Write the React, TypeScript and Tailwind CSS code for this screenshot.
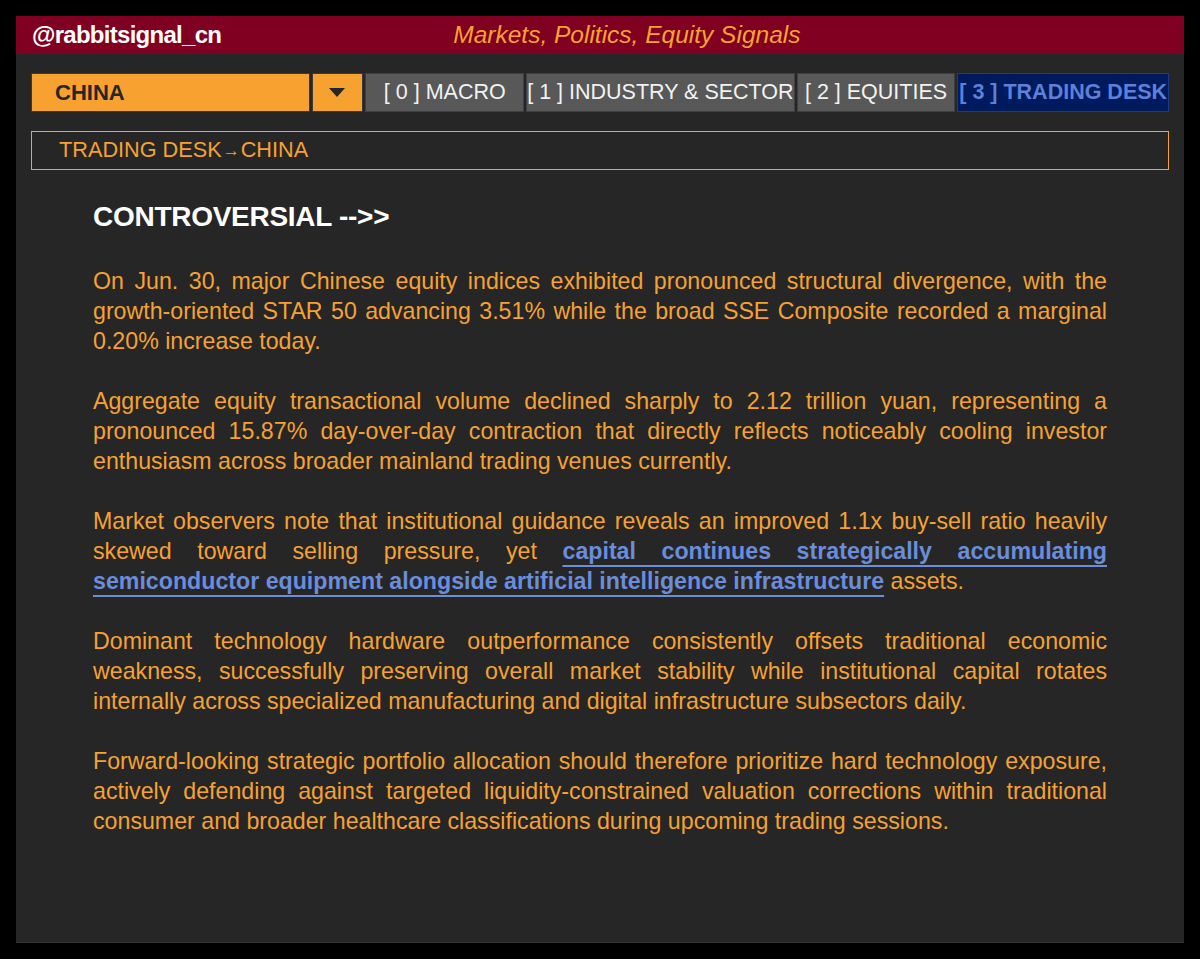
import React from "react";

const tabs = [
    { label: "[ 0 ] MACRO", width: "w-[159px]", active: false },
    { label: "[ 1 ] INDUSTRY & SECTOR", width: "w-[269px]", active: false },
    { label: "[ 2 ] EQUITIES", width: "w-[159px]", active: false },
    { label: "[ 3 ] TRADING DESK", width: "w-[212px]", active: true },
];

export default function App() {
    return (
        <div className="min-h-[959px] bg-black pt-4 font-['Liberation_Sans',Arial,sans-serif]">
            <div className="mx-4 h-[927px] bg-[#262626] border-b border-[#333]">
                <header className="flex h-[38px] items-center bg-[#7f0020] px-4">
                    <span className="text-[24px] font-bold tracking-[-0.03em] text-white">@rabbitsignal_cn</span>
                    <span className="ml-[232px] text-[24.5px] italic text-[#f5a233]">Markets, Politics, Equity Signals</span>
                </header>

                <div className="px-[15px]">
                    <nav className="mt-[19px] flex h-[39px] gap-[2px]">
                        <div className="flex w-[279px] items-center border border-[#3a3a3a] bg-[#f7a230] pl-[23px] text-[22px] font-bold text-[#262626]">
                            CHINA
                        </div>
                        <div className="flex w-[52px] items-center justify-center border border-[#3a3a3a] bg-[#f7a230]">
                            <svg width="16" height="9" viewBox="0 0 16 9">
                                <polygon points="0,0 16,0 8,9" fill="#262626" />
                            </svg>
                        </div>
                        {tabs.map((tab) => (
                            <div
                                key={tab.label}
                                className={
                                    tab.active
                                        ? `${tab.width} flex items-center justify-center whitespace-nowrap border border-[#1c3a8a] bg-[#001a5e] text-[21.5px] font-bold text-[#5f80d8]`
                                        : `${tab.width} flex items-center justify-center whitespace-nowrap border border-[#3f3f3f] bg-[#585858] text-[21.5px] text-[#f2f2f2]`
                                }
                            >
                                {tab.label}
                            </div>
                        ))}
                    </nav>

                    <div className="mt-[19px] flex h-[39px] items-center border-[1.5px] border-[#f5a233] pl-[27px] text-[21.7px] text-[#f5a233]">
                        TRADING DESK<span className="mx-[1px] text-[17px]">→</span>CHINA
                    </div>

                    <article className="px-[62px] pt-[31px]">
                        <h1 className="text-[28px] font-bold leading-[32px] tracking-[-0.01em] text-white">CONTROVERSIAL --&gt;&gt;</h1>
                        <div className="mt-[33px] space-y-[30px] text-justify text-[23.2px] leading-[30px] text-[#f5a233]">
                            <p>
                                On Jun. 30, major Chinese equity indices exhibited pronounced structural divergence, with the growth-oriented STAR 50 advancing 3.51% while the broad SSE Composite recorded a marginal 0.20% increase today.
                            </p>
                            <p>
                                Aggregate equity transactional volume declined sharply to 2.12 trillion yuan, representing a pronounced 15.87% day-over-day contraction that directly reflects noticeably cooling investor enthusiasm across broader mainland trading venues currently.
                            </p>
                            <p>
                                Market observers note that institutional guidance reveals an improved 1.1x buy-sell ratio heavily skewed toward selling pressure, yet{" "}
                                <span className="font-bold text-[#6a8ddc] underline decoration-2 underline-offset-[6px]">
                                    capital continues strategically accumulating semiconductor equipment alongside artificial intelligence infrastructure
                                </span>{" "}
                                assets.
                            </p>
                            <p>
                                Dominant technology hardware outperformance consistently offsets traditional economic weakness, successfully preserving overall market stability while institutional capital rotates internally across specialized manufacturing and digital infrastructure subsectors daily.
                            </p>
                            <p>
                                Forward-looking strategic portfolio allocation should therefore prioritize hard technology exposure, actively defending against targeted liquidity-constrained valuation corrections within traditional consumer and broader healthcare classifications during upcoming trading sessions.
                            </p>
                        </div>
                    </article>
                </div>
            </div>
        </div>
    );
}
